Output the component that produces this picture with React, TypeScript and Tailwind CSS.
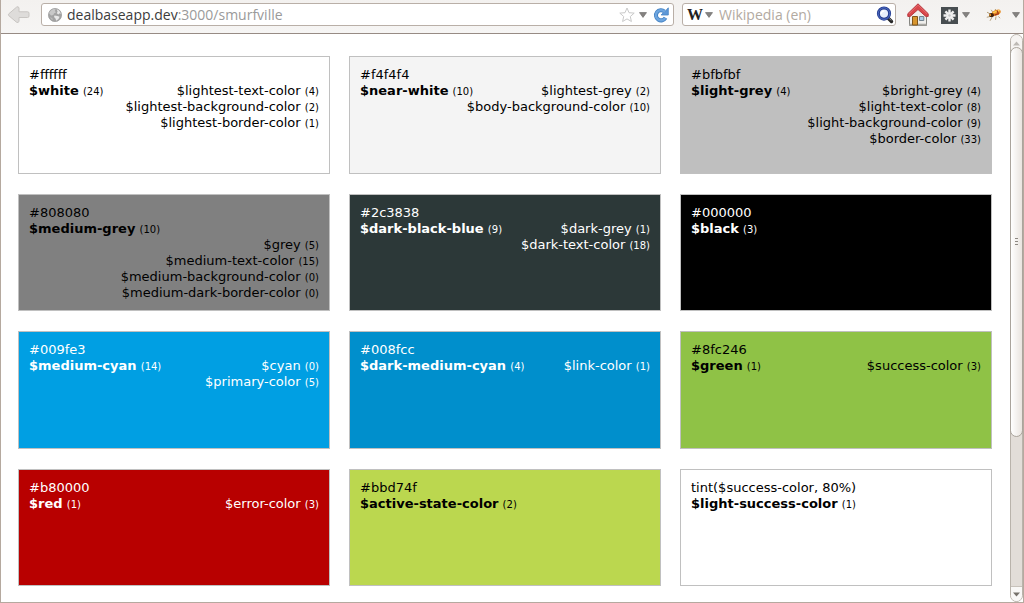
import React from "react";

type Variable = { name: string; count: number };
type Swatch = {
  value: string;
  name: string;
  count: number;
  tone: string;
  stacked?: boolean;
  aliases: Variable[];
};

const swatches: Swatch[] = [
  {
    value: "#ffffff", name: "$white", count: 24, tone: "bg-white text-black",
    aliases: [
      { name: "$lightest-text-color", count: 4 },
      { name: "$lightest-background-color", count: 2 },
      { name: "$lightest-border-color", count: 1 },
    ],
  },
  {
    value: "#f4f4f4", name: "$near-white", count: 10, tone: "bg-[#f4f4f4] text-black",
    aliases: [
      { name: "$lightest-grey", count: 2 },
      { name: "$body-background-color", count: 10 },
    ],
  },
  {
    value: "#bfbfbf", name: "$light-grey", count: 4, tone: "bg-[#bfbfbf] text-black",
    aliases: [
      { name: "$bright-grey", count: 4 },
      { name: "$light-text-color", count: 8 },
      { name: "$light-background-color", count: 9 },
      { name: "$border-color", count: 33 },
    ],
  },
  {
    value: "#808080", name: "$medium-grey", count: 10, tone: "bg-[#808080] text-black", stacked: true,
    aliases: [
      { name: "$grey", count: 5 },
      { name: "$medium-text-color", count: 15 },
      { name: "$medium-background-color", count: 0 },
      { name: "$medium-dark-border-color", count: 0 },
    ],
  },
  {
    value: "#2c3838", name: "$dark-black-blue", count: 9, tone: "bg-[#2c3838] text-white",
    aliases: [
      { name: "$dark-grey", count: 1 },
      { name: "$dark-text-color", count: 18 },
    ],
  },
  { value: "#000000", name: "$black", count: 3, tone: "bg-black text-white", aliases: [] },
  {
    value: "#009fe3", name: "$medium-cyan", count: 14, tone: "bg-[#009fe3] text-white",
    aliases: [
      { name: "$cyan", count: 0 },
      { name: "$primary-color", count: 5 },
    ],
  },
  {
    value: "#008fcc", name: "$dark-medium-cyan", count: 4, tone: "bg-[#008fcc] text-white",
    aliases: [{ name: "$link-color", count: 1 }],
  },
  {
    value: "#8fc246", name: "$green", count: 1, tone: "bg-[#8fc246] text-black",
    aliases: [{ name: "$success-color", count: 3 }],
  },
  {
    value: "#b80000", name: "$red", count: 1, tone: "bg-[#b80000] text-white",
    aliases: [{ name: "$error-color", count: 3 }],
  },
  { value: "#bbd74f", name: "$active-state-color", count: 2, tone: "bg-[#bbd74f] text-black", aliases: [] },
  { value: "tint($success-color, 80%)", name: "$light-success-color", count: 1, tone: "bg-white text-black", aliases: [] },
];

function Count({ value }: { value: number }) {
  return <span className="text-[10px] leading-none">({value})</span>;
}

function SwatchCard({ swatch }: { swatch: Swatch }) {
  return (
    <li className={`border border-[#c0c0c0] px-2.5 pt-2.5 pb-1 text-[13px] leading-4 ${swatch.tone}`}>
      <p>{swatch.value}</p>
      <div className="grid whitespace-nowrap">
        <p className="col-start-1 row-start-1">
          <strong className="font-bold">{swatch.name}</strong> <Count value={swatch.count} />
        </p>
        {swatch.aliases.length > 0 && (
          <ul className={`col-start-1 justify-self-end text-right ${swatch.stacked ? "row-start-2" : "row-start-1"}`}>
            {swatch.aliases.map((alias) => (
              <li key={alias.name}>
                {alias.name} <Count value={alias.count} />
              </li>
            ))}
          </ul>
        )}
      </div>
    </li>
  );
}

function BackIcon() {
  return (
    <svg width="24" height="20" viewBox="0 0 24 20" aria-hidden="true">
      <path
        d="M9.5 2.2 Q11.5.8 12 3 V6.8 H20.5 Q22 6.8 22 8.2 V11 Q22 12.5 20.5 12.5 H12 V16.2 Q11.5 18.4 9.5 17.2 L1.8 10.7 Q1 9.7 1.8 8.8 Z"
        fill="#dedcda" stroke="#c8c5c2" strokeWidth="1"
      />
    </svg>
  );
}

function GlobeIcon() {
  return (
    <svg width="16" height="16" viewBox="0 0 16 16" aria-hidden="true">
      <circle cx="8" cy="8" r="6.6" fill="#a3a3a3" stroke="#999" strokeWidth=".7" />
      <path d="M2 6 Q3.5 2.8 6.5 2 L8.7 2.3 7.8 4 9 5.3 7 6.5 6.3 8 4 8.4 Z" fill="#c8c8c8" />
      <path d="M9.6 2.3 Q13.2 3.6 13.8 7 L12.4 6.2 11.5 7.5 9.8 6.3 10.6 4.6Z" fill="#e6e6e6" />
      <path d="M7.5 8.5 L10.5 9 12.6 9.7 Q11.8 12.7 9.2 13.8 L8.5 11.4 7 10 Z" fill="#e8e8e8" />
      <path d="M3 10 L5.4 11.2 5.9 13.2 Q3.8 12.2 3 10Z" fill="#bdbdbd" />
    </svg>
  );
}

function StarIcon() {
  return (
    <svg width="16" height="16" viewBox="0 0 16 16" aria-hidden="true">
      <path d="M8 1 10 5.7 15.2 6.1 11.3 9.5 12.4 14.5 8 11.9 3.6 14.5 4.7 9.5.8 6.1 6 5.7Z" fill="#fff" stroke="#c9c9c9" strokeLinejoin="round" />
    </svg>
  );
}

function Triangle() {
  return (
    <svg width="8" height="6" viewBox="0 0 8 6" aria-hidden="true">
      <path d="M.5.6H7.5L4 5.4Z" fill="#858381" stroke="#6f6d6b" strokeWidth=".7" />
    </svg>
  );
}

function ReloadIcon() {
  return (
    <svg width="16" height="16" viewBox="0 0 16 16" aria-hidden="true">
      <path d="M11.4 4.4 A5.1 5.1 0 1 0 12.5 10.8" fill="none" stroke="#4583c4" strokeWidth="4" />
      <path d="M15.3.8V8H8.2L10.3 5.7 11.5 5Z" fill="#5d98d8" stroke="#4583c4" strokeWidth=".8" />
      <path d="M11.4 4.5 A5.1 5.1 0 1 0 12.2 11" fill="none" stroke="#6da5df" strokeWidth="2.4" />
    </svg>
  );
}

function MagnifierIcon() {
  return (
    <svg width="18" height="18" viewBox="0 0 18 18" aria-hidden="true">
      <path d="M12 12 15.5 15.5" stroke="#252525" strokeWidth="3.4" strokeLinecap="round" />
      <path d="M13.2 12.4 15.4 14.5" stroke="#888" strokeWidth="1" />
      <circle cx="8" cy="7.6" r="5.6" fill="#e7eefb" stroke="#243d91" strokeWidth="3" />
      <circle cx="8" cy="7.6" r="5.8" fill="none" stroke="#5673c7" strokeWidth=".9" />
      <path d="M5 8Q5.4 4.9 8.4 4.8" fill="none" stroke="#fff" strokeWidth="1.2" />
    </svg>
  );
}

function HomeIcon() {
  return (
    <svg width="22" height="24" viewBox="0 0 22 24" aria-hidden="true">
      <path d="M2.5 11.5 11 3.6 19.5 11.5V22.5H2.5Z" fill="#efeeeb" stroke="#858580" />
      <path d="M2.5 20.7H19.5V22.5H2.5Z" fill="#aaa9a4" />
      <path d="M5.5 13.5H10.5V22H5.5Z" fill="#d7952e" stroke="#80551a" />
      <path d="M12.5 13.5H16.8V17.5H12.5Z" fill="#a9cbe5" stroke="#71828e" />
      <path d="M11 .8.8 10.7V13.4H3.2L11 6.5 18.8 13.4H21.2V10.7Z" fill="#d9474b" stroke="#b83a40" strokeLinejoin="round" />
      <path d="M2 10.8 11 2.2 20 10.8" fill="none" stroke="#e5686b" />
    </svg>
  );
}

function AsteriskIcon() {
  return (
    <svg width="17" height="17" viewBox="0 0 17 17" aria-hidden="true">
      <path d="M0 0H17V17H0Z" fill="#484e51" />
      <path d="M8.5 2.5V14.5M2.5 8.5H14.5M4.4 4.4 12.6 12.6M12.6 4.4 4.4 12.6" stroke="#f0f0f0" strokeWidth="2.4" />
      <circle cx="8.5" cy="8.5" r="1.2" fill="#c5c7c8" />
    </svg>
  );
}

function BugIcon() {
  return (
    <svg width="16" height="14" viewBox="0 0 16 14" aria-hidden="true">
      <path d="M1 4.2 4.5 6M.8 9.3 4 8.5M4 12.8 6 9.3M9.5 11.8 10 8.5M12.5 8.5 14 10.2M5.2 1.8 7 4.5M9.5 1 9 4" fill="none" stroke="#a68b5d" strokeWidth=".8" />
      <ellipse cx="10.2" cy="4.7" rx="4.8" ry="2.7" transform="rotate(-23 10.2 4.7)" fill="#e88b22" />
      <path d="M7.2 4.7 13.5 2.4" stroke="#ffd35a" strokeWidth="1.3" />
      <path d="M8.5 7.1 12.6 5.6M11 2.5 12.5 6" stroke="#a43618" strokeWidth="1.2" />
      <ellipse cx="5.5" cy="7.2" rx="2.5" ry="2.1" fill="#44220b" />
      <circle cx="4.1" cy="7" r="1" fill="#ec9b27" />
    </svg>
  );
}

function ScrollBar() {
  return (
    <div aria-hidden="true" className="flex w-[13px] shrink-0 flex-col rounded-lg border border-[#b9b3ab] bg-[#e2ddd8]">
      <div className="flex h-4 shrink-0 items-center justify-center rounded-t-lg bg-[#f6f4f2]">
        <svg width="7" height="5" viewBox="0 0 7 5"><path d="M0 4.5H7L3.5.5Z" fill="#bdb9b4" /></svg>
      </div>
      <div className="-mx-px -mt-1 flex grow-[388] flex-col items-center justify-center gap-0.5 rounded-lg border border-[#aaa49c] bg-linear-to-r from-white to-[#e9e4df]">
        <span className="h-px w-[3px] bg-[#8d8882]" />
        <span className="h-px w-[3px] bg-[#8d8882]" />
        <span className="h-px w-[3px] bg-[#8d8882]" />
      </div>
      <div className="grow-[152]" />
      <div className="flex h-[15px] shrink-0 items-center justify-center rounded-b-lg border-t border-[#c8c2bb] bg-[#f9f8f7]">
        <svg width="7" height="5" viewBox="0 0 7 5"><path d="M0 .5H7L3.5 4.5Z" fill="#77726c" /></svg>
      </div>
    </div>
  );
}

export default function App() {
  return (
    <div className="flex min-h-screen flex-col border-x border-b border-[#b5a99f] bg-white">
      <header className="flex h-[34px] items-start border-b border-[#978b84] bg-linear-to-b from-[#f3f1ef] to-[#f6f5f4] pt-[3px] pr-[3px] font-['Open_Sans','Noto_Sans',sans-serif] text-sm">
        <button type="button" aria-label="Back" className="ml-1.5 flex h-6 w-[34px] items-center"><BackIcon /></button>
        <form className="flex h-[23px] flex-1 items-center rounded-[3px] border border-[#b9afa7] bg-white pr-1 pl-[5px]" onSubmit={(event) => event.preventDefault()}>
          <GlobeIcon />
          <label className="relative ml-1 h-5 min-w-0 flex-1">
            <span aria-hidden="true" className="pointer-events-none absolute inset-0 whitespace-nowrap leading-5 text-[#9a9a9a]">
              <span className="font-medium text-[#3c3c3c]">dealbaseapp.dev</span>:3000/smurfville
            </span>
            <input aria-label="Address" defaultValue="dealbaseapp.dev:3000/smurfville" className="h-5 w-full bg-transparent text-transparent outline-none" />
          </label>
          <button type="button" aria-label="Bookmark"><StarIcon /></button>
          <button type="button" aria-label="History" className="ml-1"><Triangle /></button>
          <button type="submit" aria-label="Reload" className="ml-1.5"><ReloadIcon /></button>
        </form>
        <form className="ml-2 flex h-[23px] w-[214px] items-center rounded-[3px] border border-[#b9afa7] bg-white pr-px pl-1" onSubmit={(event) => event.preventDefault()}>
          <button type="button" aria-label="Search engine" className="flex items-center gap-0.5">
            <span className="font-['Liberation_Serif',serif] text-base leading-5 font-bold text-[#222]">W</span>
            <Triangle />
          </button>
          <input type="text" aria-label="Search" placeholder="Wikipedia (en)" className="ml-1.5 h-5 min-w-0 flex-1 bg-transparent outline-none placeholder:text-[#b2aaa1]" />
          <button type="submit" aria-label="Search"><MagnifierIcon /></button>
        </form>
        <button type="button" aria-label="Home" className="ml-[11px]"><HomeIcon /></button>
        <button type="button" aria-label="Extension" className="ml-3 flex h-6 items-center gap-1"><AsteriskIcon /><Triangle /></button>
        <button type="button" aria-label="Firebug" className="ml-4 flex h-6 items-center gap-2.5"><BugIcon /><Triangle /></button>
      </header>
      <div className="flex flex-1">
        <main className="flex flex-1 pt-[22px] pr-[18px] pb-4 pl-[17px] font-['DejaVu_Sans',sans-serif]">
          <ul className="grid flex-1 auto-rows-fr grid-cols-3 gap-x-[19px] gap-y-5">
            {swatches.map((swatch) => <SwatchCard key={swatch.name} swatch={swatch} />)}
          </ul>
        </main>
        <ScrollBar />
      </div>
    </div>
  );
}
